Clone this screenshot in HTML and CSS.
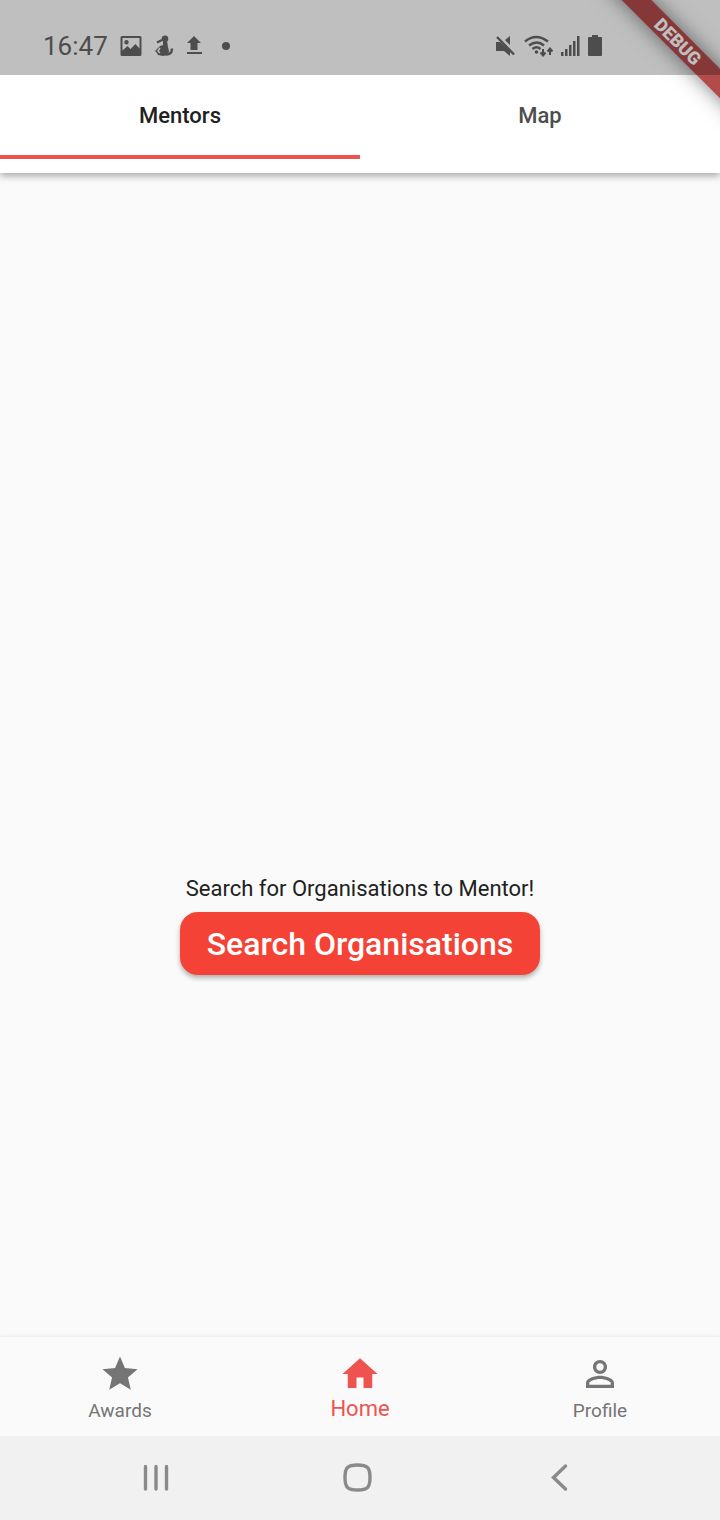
FILE: index.html
```html
<!DOCTYPE html>
<html lang="en">
  <head>
    <meta charset="UTF-8" />
    <meta name="viewport" content="width=device-width, initial-scale=1.0" />
    <title>Mentors</title>
    <link rel="stylesheet" href="styles.css">
  </head>
  <body>
    <header>
      <div class="status-bar">
        <div class="status-left">
          <span class="clock">16:47</span>
          <svg width="22" height="22" viewBox="0 0 22 22">
            <path fill-rule="evenodd" d="M2 1h18a1.500 1.500 0 0 1 1.500 1.500v17a1.500 1.500 0 0 1-1.500 1.500H2a1.500 1.500 0 0 1-1.500-1.500v-17A1.500 1.500 0 0 1 2 1zM2.500 3v12.500l5-4.500 3 3 5-5 4 4.500V3zM6.500 5a2.200 2.200 0 1 1 0 4.400a2.200 2.200 0 0 1 0-4.400z" />
          </svg>
          <svg width="20" height="22" viewBox="0 0 20 22">
            <circle cx="11" cy="3.800" r="3.300" />
            <path d="M9 6l4 0 1 6 1 4-1 4-5 1-5-1-1-2-2-2 5-5 3-1z" />
            <path class="line" d="M3 7.500l5-2.500M12 19.500q6 0 6-6" />
            <path class="cut" d="M6 13l-2 3 2 2M4 9.500l4-1" />
          </svg>
          <svg width="16" height="22" viewBox="0 0 16 22">
            <path d="M8 1l7 7h-3.500v7h-7V8H1zM1 17h15v2H1z" />
          </svg>
          <span class="dot"></span>
        </div>
        <div class="status-right">
          <svg width="22" height="22" viewBox="0 0 22 22">
            <path d="M1 7h4l10 9v5l-6-5H1zM15 1v9l-5-5z" />
            <path class="line" d="M2 2l17 17.500" />
          </svg>
          <svg width="30" height="22" viewBox="0 0 30 22">
            <path class="line" d="M1 6.500q11-9 23 0M5 10.500q8-6 15 0M8.500 14q4-3.500 8 0" />
            <circle cx="12.500" cy="17" r="1.800" />
            <path class="thin" d="M19 14v6M16.500 17.500l2.500 3 2.500-3M26 20v-6M23.500 16.500l2.500-3 2.500 3" />
          </svg>
          <svg width="20" height="22" viewBox="0 0 20 22">
            <path d="M0 17h2.500v4H0zM4 14h2.500v7H4zM8 10h2.500v11H8zM12 6h2.500v15H12zM16 1h2.500v20H16z" />
          </svg>
          <svg width="14" height="22" viewBox="0 0 14 22">
            <path d="M4 0h6v2h3a1 1 0 0 1 1 1v17a1 1 0 0 1-1 1H1a1 1 0 0 1-1-1V3a1 1 0 0 1 1-1h3z" />
          </svg>
        </div>
      </div>
      <nav class="tabs">
        <a href="#mentors" class="tab active">Mentors</a>
        <a href="#map" class="tab">Map</a>
      </nav>
      <div class="banner"><span class="ribbon">DEBUG</span></div>
    </header>

    <main id="mentors">
      <p>Search for Organisations to Mentor!</p>
      <button type="button" class="search">Search Organisations</button>
    </main>

    <nav class="bottom-nav">
      <a href="#awards">
        <svg width="42" height="42" viewBox="0 0 24 24">
          <path d="M12 17.270L18.180 21l-1.640-7.030L22 9.240l-7.190-.610L12 2 9.190 8.630 2 9.240l5.460 4.730L5.820 21z" />
        </svg>
        <span>Awards</span>
      </a>
      <a href="#home" class="active">
        <svg width="42" height="42" viewBox="0 0 24 24">
          <path d="M10 20v-6h4v6h5v-8h3L12 3 2 12h3v8z" />
        </svg>
        <span>Home</span>
      </a>
      <a href="#profile">
        <svg width="42" height="42" viewBox="0 0 24 24">
          <path d="M12 5.900a2.100 2.100 0 1 1 0 4.200a2.100 2.100 0 0 1 0-4.200m0 9c2.970 0 6.100 1.460 6.100 2.100v1.100H5.900V17c0-.640 3.130-2.100 6.100-2.100M12 4C9.790 4 8 5.790 8 8s1.790 4 4 4 4-1.790 4-4-1.790-4-4-4zm0 9c-2.670 0-8 1.340-8 4v3h16v-3c0-2.660-5.330-4-8-4z" />
        </svg>
        <span>Profile</span>
      </a>
    </nav>

    <footer class="system-nav">
      <button type="button" aria-label="Recent apps">
        <svg width="32" height="32" viewBox="0 0 32 32">
          <path d="M5.500 4.500v22.500M16 4.500v22.500M26.500 4.500v22.500" />
        </svg>
      </button>
      <button type="button" aria-label="Home screen">
        <svg width="32" height="32" viewBox="0 0 32 32">
          <path d="M15.500 3C25.500 3 28 5.500 28 15.500S25.500 28 15.500 28 3 25.500 3 15.500 5.500 3 15.500 3z" />
        </svg>
      </button>
      <button type="button" aria-label="Back">
        <svg width="32" height="32" viewBox="0 0 32 32">
          <path d="M21.500 4L9.500 15.500l12 11.500" />
        </svg>
      </button>
    </footer>
  </body>
</html>
```
FILE: styles.css
```css
* {
  box-sizing: border-box;
}
body {
  font-family: Roboto, "Liberation Sans", sans-serif;
  margin: 0;
  min-height: 100vh;
  display: flex;
  flex-direction: column;
  background-color: #fafafa;
  color: #212121;
}
a {
  color: inherit;
  text-decoration: none;
}
svg {
  display: block;
  flex: none;
}
header {
  position: relative;
  background: #fff;
  box-shadow: 0 2px 8px rgba(0, 0, 0, 0.4);
}
/* translucent, sits above the debug ribbon */
.status-bar {
  position: relative;
  z-index: 2;
  display: flex;
  justify-content: space-between;
  height: 75px;
  padding: 16px 118px 0 43px;
  background: rgba(0, 0, 0, 0.25);
  color: #4d4d4d;
}
.status-left,
.status-right {
  display: flex;
  align-items: center;
}
.status-left {
  gap: 12px;
}
.status-right {
  gap: 7px;
}
.status-bar svg {
  fill: #4d4d4d;
}
.status-bar .line,
.status-bar .thin,
.status-bar .cut {
  fill: none;
  stroke: #4d4d4d;
  stroke-width: 2.4;
}
.status-bar .thin {
  stroke-width: 2;
}
.status-bar .cut {
  stroke: #bfbfbf;
  stroke-width: 1.4;
}
.clock {
  font-size: 26px;
}
.dot {
  width: 8px;
  height: 8px;
  margin-left: 8px;
  border-radius: 50%;
  background: #4d4d4d;
}
.tabs {
  display: flex;
  height: 98px;
  padding-bottom: 14px;
}
.tab {
  flex: 1;
  border-bottom: 4px solid transparent;
  font-size: 22px;
  font-weight: 500;
  line-height: 82px;
  text-align: center;
  color: #4d4d4d;
}
.tab.active {
  color: #212121;
  border-color: #ef5350;
}
.banner {
  position: absolute;
  top: 0;
  right: 0;
  width: 140px;
  height: 140px;
  overflow: hidden;
  z-index: 1;
  pointer-events: none;
}
.ribbon {
  position: absolute;
  top: 31px;
  left: -2px;
  width: 200px;
  height: 21px;
  transform: rotate(45deg);
  background: #b34b4b;
  box-shadow: 0 0 20px rgba(0, 0, 0, 0.5);
  color: #fff;
  font-size: 18px;
  font-weight: 900;
  line-height: 21px;
  text-align: center;
}
main {
  flex: 1;
  display: flex;
  flex-direction: column;
  align-items: center;
}
/* keeps the prompt about two thirds of the way down */
main::before {
  content: "";
  flex: 33;
}
main::after {
  content: "";
  flex: 17;
}
main p {
  margin: 0 0 10px;
  font-size: 22px;
  line-height: 26px;
}
.search {
  height: 63px;
  padding: 2px 27px 0;
  border: none;
  border-radius: 18px;
  background: #f44336;
  box-shadow: 0 3px 5px rgba(0, 0, 0, 0.3);
  color: #fff;
  font-family: inherit;
  font-size: 32px;
  font-weight: 500;
  cursor: pointer;
}
.bottom-nav {
  display: flex;
  height: 99px;
  padding-top: 16px;
  background: #fafafa;
  box-shadow: 0 0 4px rgba(0, 0, 0, 0.1);
}
.bottom-nav a {
  flex: 1;
  display: flex;
  flex-direction: column;
  align-items: center;
  color: #757575;
  fill: #757575;
  font-size: 19px;
  line-height: 32px;
}
.bottom-nav .active {
  color: #ef5350;
  fill: #ef5350;
  font-size: 22px;
  line-height: 28px;
}
.system-nav {
  position: relative;
  display: flex;
  justify-content: space-between;
  align-items: center;
  height: 84px;
  padding: 0 144px 0 140px;
  background: #f1f1f1;
}
.system-nav button {
  padding: 0;
  border: none;
  background: none;
}
.system-nav svg {
  fill: none;
  stroke: #8a8a8a;
  stroke-width: 3.4;
  stroke-linecap: round;
}
```
